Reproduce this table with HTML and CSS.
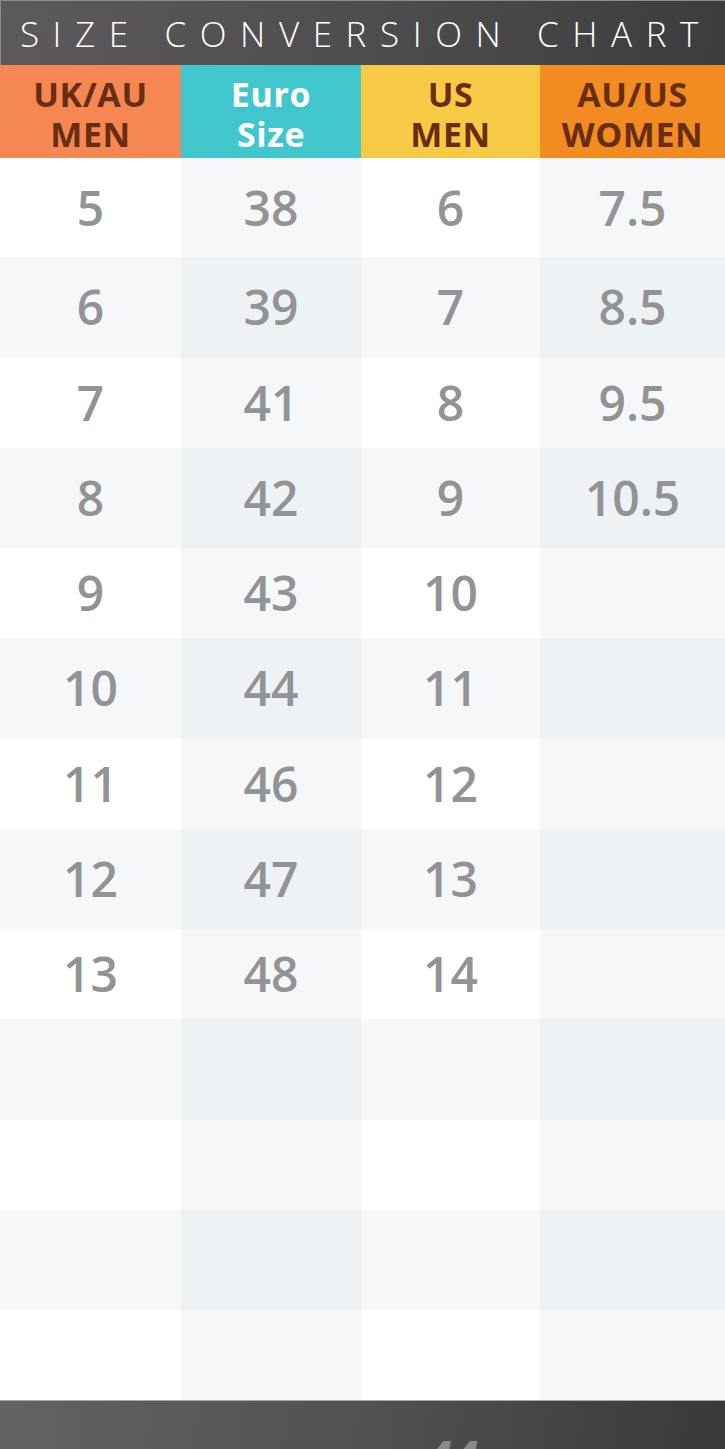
FILE: index.html
```html
<!DOCTYPE html>
<html lang="en">
<head>
<meta charset="utf-8">
<title>Size Conversion Chart</title>
<link rel="stylesheet" href="styles.css">
</head>
<body>
<div class="chart">
  <div class="title">SIZE CONVERSION CHART</div>
  <div class="heads">
    <div class="head h1"><span class="ln">UK/AU</span><span class="ln">MEN</span></div>
    <div class="head h2"><span class="ln">Euro</span><span class="ln">Size</span></div>
    <div class="head h3"><span class="ln">US</span><span class="ln">MEN</span></div>
    <div class="head h4"><span class="ln">AU/US</span><span class="ln">WOMEN</span></div>
  </div>
  <div class="rows">
    <div class="row"><span>5</span><span>38</span><span>6</span><span>7.5</span></div>
    <div class="row"><span>6</span><span>39</span><span>7</span><span>8.5</span></div>
    <div class="row"><span>7</span><span>41</span><span>8</span><span>9.5</span></div>
    <div class="row"><span>8</span><span>42</span><span>9</span><span>10.5</span></div>
    <div class="row"><span>9</span><span>43</span><span>10</span><span></span></div>
    <div class="row"><span>10</span><span>44</span><span>11</span><span></span></div>
    <div class="row"><span>11</span><span>46</span><span>12</span><span></span></div>
    <div class="row"><span>12</span><span>47</span><span>13</span><span></span></div>
    <div class="row"><span>13</span><span>48</span><span>14</span><span></span></div>
    <div class="row"><span></span><span></span><span></span><span></span></div>
    <div class="row"><span></span><span></span><span></span><span></span></div>
    <div class="row"><span></span><span></span><span></span><span></span></div>
    <div class="row"><span></span><span></span><span></span><span></span></div>
  </div>
  <div class="footer"><span></span><span></span><span class="ghost">44</span><span></span></div>
</div>
</body>
</html>
```

FILE: styles.css
```css
html, body {
  margin: 0;
  padding: 0;
  background: #ffffff;
}

.chart {
  width: 725px;
  font-family: "Open Sans", "DejaVu Sans", sans-serif;
}

.title {
  width: 722px;
  height: 64px;
  border-top: 1px solid #8e8d8e;
  border-left: 1px solid #8e8d8e;
  background: linear-gradient(100deg, #5c5a5b 0%, #4d4c4d 55%, #3d3c3d 100%);
  color: #ffffff;
  font-weight: 300;
  font-size: 35px;
  line-height: 65px;
  letter-spacing: 13.6px;
  text-align: center;
  padding-left: 4px;
  white-space: nowrap;
}

.heads {
  display: grid;
  grid-template-columns: 181px 180px 179px 1fr;
  height: 93px;
}

.head {
  display: flex;
  flex-direction: column;
  align-items: center;
  padding-top: 9px;
  font-weight: 700;
  font-size: 34px;
  letter-spacing: 0.6px;
  color: #6a2d12;
}

.ln {
  display: block;
  height: 40px;
  line-height: 40px;
}

.h1 { background: #f58752; }
.h2 { background: #42c6ce; color: #ffffff; }
.h3 { background: #f6ca45; }
.h4 { background: #f18b22; }

.rows {
  display: flex;
  flex-direction: column;
}

.row {
  display: grid;
  grid-template-columns: 181px 180px 179px 1fr;
  height: 90px;
}

.row:first-child { height: 99px; }
.row:nth-child(even) { height: 100.5px; }

.row span {
  display: flex;
  align-items: center;
  justify-content: center;
  font-size: 48px;
  line-height: 1;
  font-weight: 600;
  color: #929395;
  background: #ffffff;
}

.row span:nth-child(even) { background: #f6f7f9; }
.row:nth-child(even) span { background: #f6f7f9; }
.row:nth-child(even) span:nth-child(even) { background: #eef2f5; }

.footer {
  display: grid;
  grid-template-columns: 181px 180px 179px 1fr;
  height: 48px;
  border-top: 1px solid #a9a9a9;
  background: linear-gradient(100deg, #646263 0%, #525152 50%, #3a393a 100%);
  overflow: hidden;
}

.ghost {
  text-align: center;
  font-size: 48px;
  line-height: 1;
  font-weight: 700;
  font-style: italic;
  color: #8a8a8b;
  padding-top: 33px;
  padding-left: 2px;
}
```
